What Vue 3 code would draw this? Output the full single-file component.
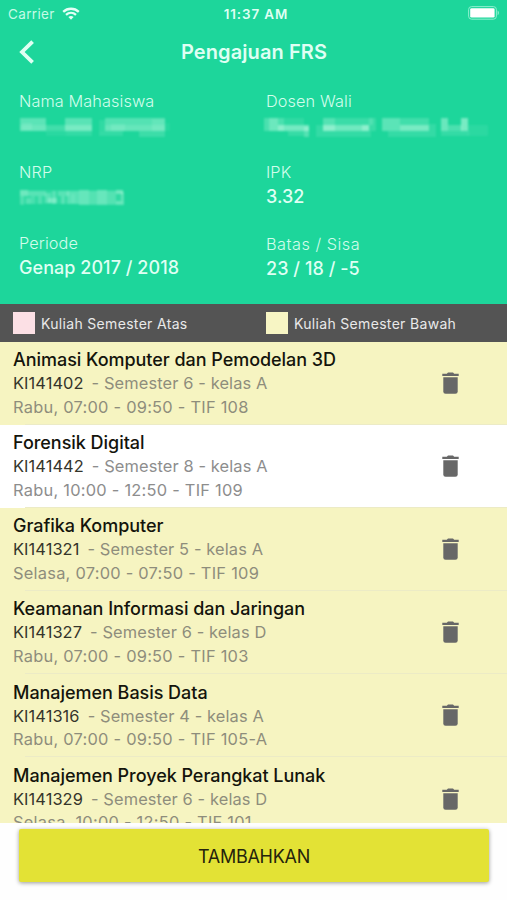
<script setup>
const courses = [
  { name: 'Animasi Komputer dan Pemodelan 3D', code: 'KI141402', detail: 'Semester 6 - kelas A', time: 'Rabu, 07:00 - 09:50 - TIF 108', lower: true },
  { name: 'Forensik Digital', code: 'KI141442', detail: 'Semester 8 - kelas A', time: 'Rabu, 10:00 - 12:50 - TIF 109', lower: false },
  { name: 'Grafika Komputer', code: 'KI141321', detail: 'Semester 5 - kelas A', time: 'Selasa, 07:00 - 07:50 - TIF 109', lower: true },
  { name: 'Keamanan Informasi dan Jaringan', code: 'KI141327', detail: 'Semester 6 - kelas D', time: 'Rabu, 07:00 - 09:50 - TIF 103', lower: true },
  { name: 'Manajemen Basis Data', code: 'KI141316', detail: 'Semester 4 - kelas A', time: 'Rabu, 07:00 - 09:50 - TIF 105-A', lower: true },
  { name: 'Manajemen Proyek Perangkat Lunak', code: 'KI141329', detail: 'Semester 6 - kelas D', time: 'Selasa, 10:00 - 12:50 - TIF 101', lower: true }
]

// Censored values drawn as translucent tiles: [x, y, width, height, opacity]
const info = [
  { label: 'Nama Mahasiswa', mask: [
    [1, 0, 26, 7, .34], [1, 7, 26, 6, .42], [3, 5, 10, 7, .12], [27, 7, 19, 6, .2], [46, 0, 27, 7, .33], [46, 7, 27, 6, .5],
    [80, 2, 6, 11, .1], [86, 0, 60, 7, .3], [86, 7, 60, 6, .4], [92, 6, 14, 7, .12], [133, 1, 13, 12, .12],
    [27, 13, 20, 5, .07], [47, 13, 26, 5, .12], [80, 13, 24, 5, .12], [120, 13, 26, 6, .17], [146, 5, 5, 8, .06]] },
  { label: 'Dosen Wali', mask: [
    [-2, 0, 20, 13, .25], [3, 0, 9, 13, .25], [18, 0, 20, 7, .1], [12, 7, 31, 6, .48], [38, 9, 5, 10, .3], [22, 13, 16, 5, .14],
    [50, 7, 7, 12, .12], [57, 0, 12, 13, .3], [69, 0, 38, 7, .16], [57, 7, 46, 6, .46], [96, 7, 7, 6, .3], [57, 13, 48, 6, .12], [103, 0, 7, 13, .15],
    [116, 0, 18, 13, .34], [134, 0, 29, 7, .2], [134, 7, 29, 6, .5], [122, 13, 41, 6, .13], [163, 6, 7, 13, .12],
    [175, 0, 7, 13, .42], [182, 7, 14, 6, .25], [195, 0, 7, 13, .5], [175, 13, 28, 5, .13], [202, 7, 20, 11, .08]] },
  { label: 'NRP', mask: [
    [1, 1, 103, 14, .1],
    [1, 1, 8, 6, .38], [1, 7, 4, 9, .2], [7, 9, 5, 6, .24], [9, 2, 18, 5, .25], [12, 7, 4, 8, .16], [19, 7, 4, 8, .2], [26, 4, 6, 10, .25], [29, 9, 9, 5, .32], [33, 2, 4, 13, .25],
    [39, 2, 11, 5, .25], [42, 7, 4, 8, .25], [48, 2, 12, 13, .25], [52, 5, 4, 9, .1], [60, 1, 10, 15, .33], [70, 2, 8, 14, .22], [78, 1, 10, 15, .34], [88, 2, 9, 14, .22], [97, 1, 7, 4, .4], [102, 3, 3, 9, .3], [97, 12, 8, 4, .35]] },
  { label: 'IPK', value: '3.32' },
  { label: 'Periode', value: 'Genap 2017 / 2018' },
  { label: 'Batas / Sisa', value: '23 / 18 / -5', wide: true }
]
</script>

<template>
  <main class="screen">
    <header class="header">
      <div class="status">
        <div class="carrier">
          <span>Carrier</span>
          <svg class="wifi" viewBox="0 0 18 13">
            <path d="M1.2 4.8C5.6.7 12.4.7 16.8 4.8" />
            <path d="M4 7.8c2.9-2.6 7.1-2.6 10 0" />
            <path class="dot" d="M6.4 10c1.6-1.4 3.6-1.4 5.2 0L9 12.7Z" />
          </svg>
        </div>
        <span class="clock">11:37 AM</span>
        <svg class="battery" viewBox="0 0 32 14">
          <rect class="shell" x=".6" y=".6" width="27.8" height="12.6" rx="3" />
          <rect class="charge" x="2.2" y="2.2" width="24.4" height="9.4" rx="1.4" />
          <path class="charge cap" d="M29.6 4.6c1.8.8 1.8 3.8 0 4.6Z" />
        </svg>
      </div>
      <nav class="nav">
        <svg class="back" viewBox="0 0 16 24"><path d="M13.6 1.7 3 12l10.6 10.3" /></svg>
        <h1>Pengajuan FRS</h1>
      </nav>
      <dl class="info">
        <div v-for="i in info" :key="i.label" class="cell">
          <dt :class="{ wide: i.wide }">{{ i.label }}</dt>
          <dd>
            <template v-if="i.value">{{ i.value }}</template>
            <svg v-else class="mask" viewBox="-3 -1 230 22">
              <rect v-for="(m, n) in i.mask" :key="n" :x="m[0]" :y="m[1]" :width="m[2]" :height="m[3]" :fill-opacity="m[4]" />
            </svg>
          </dd>
        </div>
      </dl>
    </header>

    <div class="legend">
      <div class="key"><i class="swatch upper"></i>Kuliah Semester Atas</div>
      <div class="key"><i class="swatch lower"></i>Kuliah Semester Bawah</div>
    </div>

    <ul class="list">
      <li v-for="c in courses" :key="c.name" class="row" :class="{ lower: c.lower }">
        <div class="text">
          <h2>{{ c.name }}</h2>
          <p class="meta"><span class="code">{{ c.code }}</span><span class="detail">- {{ c.detail }}</span></p>
          <p class="time">{{ c.time }}</p>
        </div>
        <svg class="trash" viewBox="0 0 17 22">
          <path d="M.3 1.7h4.5L6 .4h5l1.2 1.3h4.5v2.2H.3Z" />
          <path d="M1.3 5.2h14.4v14.3q0 2.3-2.3 2.3H3.6q-2.3 0-2.3-2.3Z" />
        </svg>
      </li>
    </ul>

    <footer class="footer"><button class="add">TAMBAHKAN</button></footer>
  </main>
</template>

<style>
body { background: #fff; }
</style>

<style scoped>
.screen { display: flex; flex-direction: column; width: 507px; height: 900px; overflow: hidden; background: #fefefe; font-family: Inter, "Liberation Sans", sans-serif; }
.header { flex: none; height: 304px; background: #1dd69b; color: #dffff3; }
.status { display: grid; grid-template-columns: 1fr auto 1fr; align-items: center; height: 27px; padding: 0 7px 0 8px; }
.carrier { display: flex; align-items: center; gap: 7px; font-size: 13.5px; letter-spacing: .35px; color: #c5fbe6; }
.wifi { width: 18px; height: 13px; margin-top: -1px; fill: none; stroke: #e4fff6; stroke-width: 2.3; }
.wifi .dot { fill: #e4fff6; stroke: none; }
.clock { font-size: 13.4px; font-weight: 600; letter-spacing: .9px; padding-left: 4px; }
.battery { justify-self: end; width: 32px; height: 14px; margin-top: -1px; }
.shell { fill: none; stroke: #8df0cf; stroke-width: 1; }
.charge { fill: #fff; }
.cap { fill: #8df0cf; }
.nav { display: grid; grid-template-columns: 60px 1fr 60px; align-items: center; height: 50px; }
.back { width: 16px; height: 24px; margin-left: 19px; fill: none; stroke: #dffff3; stroke-width: 3.8; }
h1 { margin: 0; padding-left: 1px; text-align: center; font-size: 20px; font-weight: 600; letter-spacing: .1px; line-height: 24px; }
.info { display: grid; grid-template-columns: 247px 1fr; grid-auto-rows: 71px; margin: 0; padding: 13px 0 0 19px; }
dt { height: 24px; line-height: 23px; font-size: 16.3px; font-weight: 300; letter-spacing: .1px; color: #d2fdec; }
dt.wide { letter-spacing: .5px; line-height: 25px; }
dd { height: 24px; margin: 0; line-height: 24px; font-size: 18px; font-weight: 500; letter-spacing: .05px; }
dt.wide + dd { padding-top: 1px; }
.mask { display: block; width: 230px; height: 22px; margin: 3px 0 0 -3px; fill: #d4ffec; filter: blur(1px); }
.legend { flex: none; display: grid; grid-template-columns: 253px 1fr; align-items: center; height: 38px; padding-left: 13px; background: #545454; color: #e9e9e9; }
.key { display: flex; align-items: center; gap: 6px; font-size: 14px; letter-spacing: .32px; }
.swatch { width: 22px; height: 22px; }
.swatch.upper { background: #fce0e5; }
.swatch.lower { background: #f7f5c4; }
.list { flex: none; height: 481px; overflow: hidden; margin: 0; padding: 0; list-style: none; }
.row { display: flex; align-items: center; justify-content: space-between; height: 83.1px; padding: 0 48px 0 13px; background: linear-gradient(#ecebc6, #ecebc6) 25px 100% / 482px 1px no-repeat #fff; }
.row.lower { background-color: #f6f4c1; }
h2 { margin: 0; font-size: 18px; font-weight: 500; line-height: 24px; letter-spacing: -.04px; color: #14140c; }
p { margin: 0; line-height: 23.4px; font-size: 16.4px; color: #8e8d7c; }
.row:not(.lower) p { color: #8d8d8d; }
.row .meta .code { color: #35352b; letter-spacing: .08px; }
.detail { margin-left: 8px; letter-spacing: .12px; }
.time { letter-spacing: .25px; }
.trash { width: 17px; height: 22px; margin-top: -1px; fill: #676767; }
.footer { flex: 1; padding: 6px 18px 0 19px; }
.add { display: block; width: 470px; height: 53px; padding: 2px 0 0; border: 0; border-radius: 2px; background: #e3e235; box-shadow: 0 1px 4px rgba(0, 0, 0, .4); font: 400 18px Inter, "Liberation Sans", sans-serif; letter-spacing: -.25px; color: #25240c; }
</style>
